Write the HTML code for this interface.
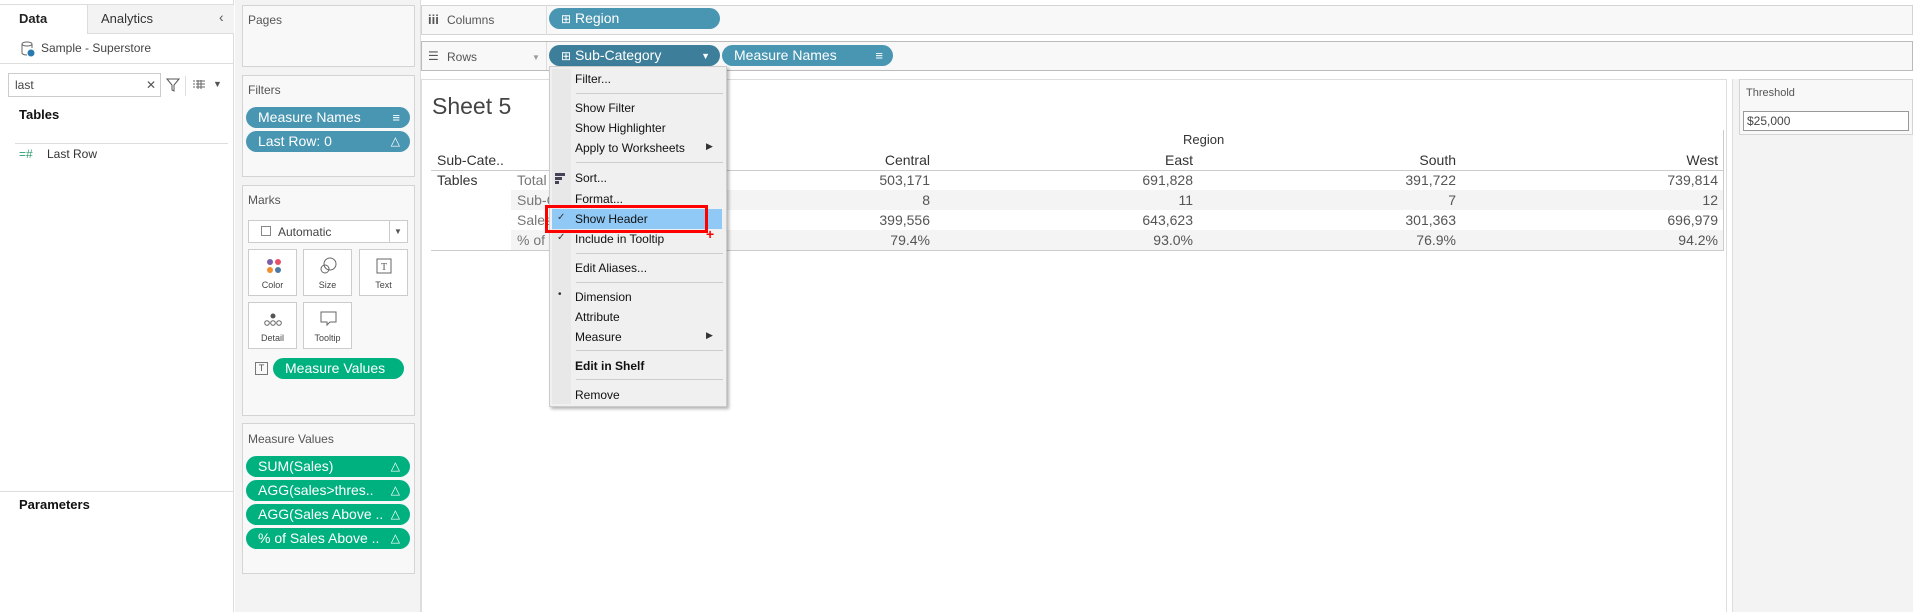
<!DOCTYPE html>
<html><head><style>
*{box-sizing:border-box;margin:0;padding:0}
body{width:1913px;height:612px;position:relative;overflow:hidden;background:#fff;font-family:"Liberation Sans",sans-serif;font-size:12px;color:#333}
.a{position:absolute}
.pill{position:absolute;border-radius:11px;color:#fff;font-size:14px;line-height:21px;height:21px;padding-left:12px;white-space:nowrap}
.blue{background:#4996b2}
.green{background:#00b180}
.tri{position:absolute;right:10px;top:0;font-size:12px}
.panel{position:absolute;background:#f8f8f8;border:1px solid #d4d4d4}
.lbl{position:absolute;font-size:12px;color:#555}
.btn{position:absolute;background:#fff;border:1px solid #ccc;width:49px;height:47px;font-size:9px;text-align:center;color:#444}
.btn span{position:absolute;bottom:5px;left:0;right:0}
.mi{position:absolute;left:26px;font-size:12px;color:#111;line-height:14px}
.sep{position:absolute;left:27px;right:4px;height:1px;background:#ccc}
.num{position:absolute;font-size:14px;color:#555;text-align:right;width:120px}
</style></head><body>
<!-- left panel -->
<div class="a" style="left:0;top:0;width:234px;height:612px;background:#fff;border-right:1px solid #ddd"></div>
<div class="a" style="left:0;top:4px;width:234px;height:1px;background:#ddd"></div>
<div class="a" style="left:87px;top:5px;width:147px;height:29px;background:#f3f3f3;border-left:1px solid #ddd;border-bottom:1px solid #ddd"></div>
<div class="a" style="left:19px;top:11px;font-size:13px;font-weight:bold;color:#222">Data</div>
<div class="a" style="left:101px;top:11px;font-size:13px;color:#333">Analytics</div>
<div class="a" style="left:219px;top:9px;font-size:14px;color:#555">‹</div>
<svg class="a" style="left:21px;top:41px" width="14" height="16"><ellipse cx="6" cy="3" rx="5" ry="2" fill="none" stroke="#666"/><path d="M1 3v9c0 1 2 2 5 2M11 3v4" fill="none" stroke="#666"/><circle cx="10" cy="12" r="3.5" fill="#2a7ab0"/></svg>
<div class="a" style="left:41px;top:41px;font-size:12px;color:#444">Sample - Superstore</div>
<div class="a" style="left:0;top:63px;width:234px;height:1px;background:#ddd"></div>
<div class="a" style="left:8px;top:73px;width:153px;height:24px;border:1px solid #ccc;background:#fff"></div>
<div class="a" style="left:15px;top:78px;font-size:12px;color:#444">last</div>
<div class="a" style="left:146px;top:78px;font-size:12px;color:#555">✕</div>
<svg class="a" style="left:166px;top:78px" width="14" height="14"><path d="M1 1h12L8 7v6L6 12V7z" fill="none" stroke="#555"/></svg>
<div class="a" style="left:185px;top:76px;width:1px;height:20px;background:#ddd"></div>
<svg class="a" style="left:193px;top:80px" width="12" height="10"><path d="M0 1h2M0 4h2M0 7h2M3 1h9M3 4h9M3 7h9M5 0v9M8 0v9" stroke="#666"/></svg>
<div class="a" style="left:213px;top:79px;font-size:9px;color:#555">▼</div>
<div class="a" style="left:19px;top:107px;font-size:13px;font-weight:bold;color:#111">Tables</div>
<div class="a" style="left:15px;top:143px;width:213px;height:1px;background:#ddd"></div>
<div class="a" style="left:19px;top:147px;font-size:12px;color:#2a9d6e">=#</div>
<div class="a" style="left:47px;top:147px;font-size:12px;color:#333">Last Row</div>
<div class="a" style="left:0;top:491px;width:234px;height:1px;background:#ddd"></div>
<div class="a" style="left:19px;top:497px;font-size:13px;font-weight:bold;color:#111">Parameters</div>
<!-- middle column -->
<div class="a" style="left:235px;top:0;width:186px;height:612px;background:#f3f3f3;border-right:1px solid #ddd"></div>
<div class="panel" style="left:242px;top:5px;width:173px;height:62px"></div>
<div class="lbl" style="left:248px;top:13px">Pages</div>
<div class="panel" style="left:242px;top:75px;width:173px;height:102px"></div>
<div class="lbl" style="left:248px;top:83px">Filters</div>
<div class="pill blue" style="left:246px;top:107px;width:164px">Measure Names<span class="tri" style="font-size:13px">≡</span></div>
<div class="pill blue" style="left:246px;top:131px;width:164px">Last Row: 0<span class="tri">△</span></div>
<div class="panel" style="left:242px;top:185px;width:173px;height:231px"></div>
<div class="lbl" style="left:248px;top:193px">Marks</div>
<div class="a" style="left:248px;top:220px;width:160px;height:23px;background:#fff;border:1px solid #ccc"></div>
<div class="a" style="left:389px;top:220px;width:1px;height:23px;background:#ccc"></div>
<div class="a" style="left:261px;top:226px;width:10px;height:10px;border:1px solid #888"></div>
<div class="a" style="left:278px;top:225px;font-size:12px;color:#444">Automatic</div>
<div class="a" style="left:394px;top:227px;font-size:8px;color:#555">▼</div>
<div class="btn" style="left:248px;top:249px"><svg style="position:absolute;left:17px;top:8px" width="16" height="16"><circle cx="4" cy="4" r="3" fill="#7a5ea8"/><circle cx="12" cy="4" r="3" fill="#e8506a"/><circle cx="4" cy="12" r="3" fill="#f28e2b"/><circle cx="12" cy="12" r="3" fill="#4e79a7"/></svg><span>Color</span></div>
<div class="btn" style="left:303px;top:249px"><svg style="position:absolute;left:15px;top:7px" width="18" height="18"><circle cx="11" cy="7" r="6" fill="none" stroke="#666"/><circle cx="6" cy="12" r="4" fill="none" stroke="#666"/></svg><span>Size</span></div>
<div class="btn" style="left:359px;top:249px"><svg style="position:absolute;left:16px;top:8px" width="16" height="16"><rect x="1" y="1" width="14" height="14" fill="none" stroke="#666"/><text x="8" y="12" font-size="10" text-anchor="middle" fill="#555" font-family="Liberation Serif">T</text></svg><span>Text</span></div>
<div class="btn" style="left:248px;top:302px"><svg style="position:absolute;left:14px;top:10px" width="20" height="14"><circle cx="10" cy="3" r="2.5" fill="#555"/><circle cx="4" cy="10" r="2.3" fill="none" stroke="#666"/><circle cx="10" cy="10" r="2.3" fill="none" stroke="#666"/><circle cx="16" cy="10" r="2.3" fill="none" stroke="#666"/></svg><span>Detail</span></div>
<div class="btn" style="left:303px;top:302px"><svg style="position:absolute;left:16px;top:8px" width="18" height="16"><path d="M1 1h15v10H10l-3 3v-3H1z" fill="none" stroke="#666"/></svg><span>Tooltip</span></div>
<div class="a" style="left:255px;top:362px;width:13px;height:13px;border:1px solid #777;font-size:9px;text-align:center;line-height:11px;color:#555">T</div>
<div class="pill green" style="left:273px;top:358px;width:131px">Measure Values</div>
<div class="panel" style="left:242px;top:423px;width:173px;height:151px"></div>
<div class="lbl" style="left:248px;top:432px">Measure Values</div>
<div class="pill green" style="left:246px;top:456px;width:164px">SUM(Sales)<span class="tri">△</span></div>
<div class="pill green" style="left:246px;top:480px;width:164px">AGG(sales&gt;thres..<span class="tri">△</span></div>
<div class="pill green" style="left:246px;top:504px;width:164px">AGG(Sales Above ..<span class="tri">△</span></div>
<div class="pill green" style="left:246px;top:528px;width:164px">% of Sales Above ..<span class="tri">△</span></div>
<!-- shelves -->
<div class="panel" style="left:421px;top:5px;width:1492px;height:30px"></div>
<div class="a" style="left:546px;top:5px;width:1px;height:30px;background:#ddd"></div>
<div class="a" style="left:428px;top:12px;font-size:13px;color:#555;font-weight:bold">iii</div>
<div class="a" style="left:447px;top:13px;font-size:12px;color:#555">Columns</div>
<div class="pill blue" style="left:549px;top:8px;width:171px"><span style="font-size:12px">⊞</span> Region</div>
<div class="panel" style="left:421px;top:41px;width:1492px;height:30px;border-color:#bbb"></div>
<div class="a" style="left:546px;top:42px;width:1px;height:28px;background:#ddd"></div>
<div class="a" style="left:428px;top:49px;font-size:12px;color:#555">☰</div>
<div class="a" style="left:447px;top:50px;font-size:12px;color:#555">Rows</div>
<div class="a" style="left:532px;top:53px;font-size:8px;color:#999">▼</div>
<div class="pill" style="left:549px;top:45px;width:171px;background:#3d7f9a"><span style="font-size:12px">⊞</span> Sub-Category<span class="tri" style="font-size:9px;top:1px">▼</span></div>
<div class="pill blue" style="left:722px;top:45px;width:171px">Measure Names<span class="tri" style="font-size:13px">≡</span></div>
<!-- sheet -->
<div class="a" style="left:421px;top:79px;width:1306px;height:533px;border:1px solid #ddd;border-bottom:none;background:#fff"></div>
<div class="a" style="left:432px;top:93px;font-size:23px;color:#444">Sheet 5</div>
<div class="a" style="left:1183px;top:132px;font-size:13px;color:#333">Region</div>
<div class="a" style="left:1723px;top:130px;width:1px;height:121px;background:#ccc"></div>
<div class="a" style="left:437px;top:152px;font-size:14px;color:#333">Sub-Cate..</div>
<div class="a" style="left:431px;top:170px;width:1293px;height:1px;background:#ccc"></div>
<div class="a" style="left:511px;top:190px;width:1212px;height:20px;background:#f4f4f4"></div>
<div class="a" style="left:511px;top:230px;width:1212px;height:20px;background:#f4f4f4"></div>
<div class="a" style="left:431px;top:250px;width:1293px;height:1px;background:#ccc"></div>
<div class="a" style="left:437px;top:172px;font-size:14px;color:#333">Tables</div>
<div class="a" style="left:517px;top:172px;font-size:14px;color:#777">Total</div>
<div class="a" style="left:517px;top:192px;font-size:14px;color:#777">Sub-C</div>
<div class="a" style="left:517px;top:212px;font-size:14px;color:#777">Sales</div>
<div class="a" style="left:517px;top:232px;font-size:14px;color:#777">% of</div>
<div class="num" style="left:810px;top:152px;color:#333">Central</div>
<div class="num" style="left:1073px;top:152px;color:#333">East</div>
<div class="num" style="left:1336px;top:152px;color:#333">South</div>
<div class="num" style="left:1598px;top:152px;color:#333">West</div>
<div class="num" style="left:810px;top:172px">503,171</div><div class="num" style="left:1073px;top:172px">691,828</div><div class="num" style="left:1336px;top:172px">391,722</div><div class="num" style="left:1598px;top:172px">739,814</div>
<div class="num" style="left:810px;top:192px">8</div><div class="num" style="left:1073px;top:192px">11</div><div class="num" style="left:1336px;top:192px">7</div><div class="num" style="left:1598px;top:192px">12</div>
<div class="num" style="left:810px;top:212px">399,556</div><div class="num" style="left:1073px;top:212px">643,623</div><div class="num" style="left:1336px;top:212px">301,363</div><div class="num" style="left:1598px;top:212px">696,979</div>
<div class="num" style="left:810px;top:232px">79.4%</div><div class="num" style="left:1073px;top:232px">93.0%</div><div class="num" style="left:1336px;top:232px">76.9%</div><div class="num" style="left:1598px;top:232px">94.2%</div>
<!-- threshold -->
<div class="a" style="left:1732px;top:79px;width:181px;height:533px;background:#f3f3f3;border-left:1px solid #ddd"></div>
<div class="panel" style="left:1739px;top:79px;width:174px;height:56px"></div>
<div class="lbl" style="left:1746px;top:87px;font-size:11px">Threshold</div>
<div class="a" style="left:1743px;top:111px;width:166px;height:20px;background:#fff;border:1px solid #999;font-size:12px;color:#444;padding:2px 3px">$25,000</div>
<!-- menu -->
<div class="a" style="left:549px;top:66px;width:178px;height:341px;background:#f0f0f0;border:1px solid #ccc;box-shadow:2px 2px 3px rgba(0,0,0,.3)"></div>
<div class="a" style="left:552px;top:69px;width:19px;height:335px;background:#e8e8e8"></div>
<div class="a" style="left:552px;top:209px;width:170px;height:20px;background:#90c8f6"></div>
<div class="a" style="left:549px;top:66px;width:178px">
<div class="mi" style="top:6px">Filter...</div><div class="sep" style="top:27px"></div>
<div class="mi" style="top:35px">Show Filter</div>
<div class="mi" style="top:55px">Show Highlighter</div>
<div class="mi" style="top:75px">Apply to Worksheets</div><div class="a" style="left:157px;top:75px;font-size:9px">▶</div>
<div class="sep" style="top:96px"></div>
<div class="a" style="left:6px;top:107px;width:10px;height:3px;background:#445"></div><div class="a" style="left:6px;top:111px;width:7px;height:3px;background:#445"></div><div class="a" style="left:6px;top:115px;width:4px;height:3px;background:#445"></div>
<div class="mi" style="top:105px">Sort...</div>
<div class="mi" style="top:126px">Format...</div>
<div class="a" style="left:8px;top:146px;font-size:10px">✓</div><div class="mi" style="top:146px">Show Header</div>
<div class="a" style="left:8px;top:166px;font-size:10px">✓</div><div class="mi" style="top:166px">Include in Tooltip</div>
<div class="sep" style="top:187px"></div>
<div class="mi" style="top:195px">Edit Aliases...</div>
<div class="sep" style="top:216px"></div>
<div class="a" style="left:9px;top:223px;font-size:10px">•</div><div class="mi" style="top:224px">Dimension</div>
<div class="mi" style="top:244px">Attribute</div>
<div class="mi" style="top:264px">Measure</div><div class="a" style="left:157px;top:264px;font-size:9px">▶</div>
<div class="sep" style="top:284px"></div>
<div class="mi" style="top:293px;font-weight:bold">Edit in Shelf</div>
<div class="sep" style="top:313px"></div>
<div class="mi" style="top:322px">Remove</div>
</div>
<div class="a" style="left:545px;top:205px;width:163px;height:28px;border:3px solid #f00"></div>
<div class="a" style="left:706px;top:226px;font-size:14px;color:#f00;font-weight:bold">+</div>
</body></html>
